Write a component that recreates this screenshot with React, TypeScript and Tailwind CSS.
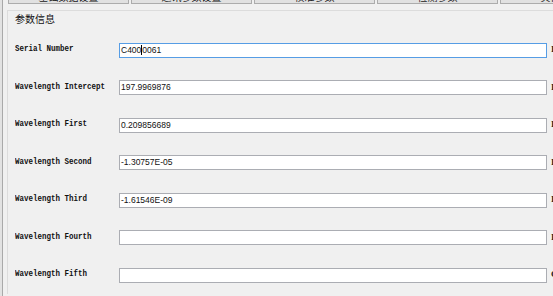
import React from 'react';

// Parameter rows shown in the group box
interface ParamRow {
  label: string;
  value: string;
  tail: string;
}

const rows: ParamRow[] = [
  { label: 'Serial Number', value: 'C4000061', tail: 'I' },
  { label: 'Wavelength Intercept', value: '197.9969876', tail: 'I' },
  { label: 'Wavelength First', value: '0.209856689', tail: 'I' },
  { label: 'Wavelength Second', value: '-1.30757E-05', tail: 'I' },
  { label: 'Wavelength Third', value: '-1.61546E-09', tail: 'I' },
  { label: 'Wavelength Fourth', value: '', tail: 'I' },
  { label: 'Wavelength Fifth', value: '', tail: 'C' },
];

const tabs = ['基础数据设置', '通讯参数设置', '校准参数', '检测参数', '其他设置'];

export default function App() {
  return (
    <div className="w-[553px] h-[296px] overflow-hidden flex bg-[#f0f0f0]">
      <div className="w-[2px] shrink-0 bg-[#e2e2e2]" />
      <div className="flex-1 min-w-0 border-l border-[#a9a9a9] bg-[#f0f0f0] overflow-hidden">
        {/* Tab strip (scrolled, only the bottom edge is visible) */}
        <div className="flex gap-[2px] ml-[5px] h-[4px] overflow-visible">
          {tabs.map((t) => (
            <div
              key={t}
              className="w-[121px] shrink-0 h-[4px] overflow-hidden border-x border-b border-[#acacac] bg-[#e1e1e1] flex justify-center"
            >
              <span className="text-[10px] leading-[10px] -mt-[8px] text-[#222] font-['Noto_Sans_CJK_SC',sans-serif] whitespace-nowrap">
                {t}
              </span>
            </div>
          ))}
        </div>

        {/* Group box */}
        <div className="mt-[6px] ml-[4px] border-t border-l border-[#dcdcdc] pl-[7px]">
          <div className="h-[20px] pt-[1px] leading-[14px] text-[10px] text-[#111] font-['Noto_Sans_CJK_SC',sans-serif]">
            参数信息
          </div>
          {rows.map((r, i) => (
            <div key={r.label} className={`flex items-center ${i % 2 === 0 ? 'h-[38px]' : 'h-[37px]'}`}>
              <div className="w-[104px] shrink-0 text-[7.5px] font-bold text-[#111] font-['Liberation_Mono',monospace] whitespace-nowrap scale-y-[1.25] origin-left">
                {r.label}
              </div>
              <div
                className={`w-[428px] h-[15px] shrink-0 bg-white border flex items-center pl-[1px] text-[8.5px] text-[#111] font-['Liberation_Sans',sans-serif] ${
                  i === 0 ? 'border-[#569de5]' : 'border-[#abadb3]'
                }`}
              >
                {i === 0 ? (
                  <>
                    <span>C400</span>
                    <span className="w-[1px] h-[10px] bg-black" />
                    <span>0061</span>
                  </>
                ) : (
                  r.value
                )}
              </div>
              <div className="ml-[4px] text-[9px] font-bold text-[#222] font-['Liberation_Serif',serif] whitespace-nowrap">
                {r.tail}
              </div>
            </div>
          ))}
        </div>
      </div>
    </div>
  );
}
